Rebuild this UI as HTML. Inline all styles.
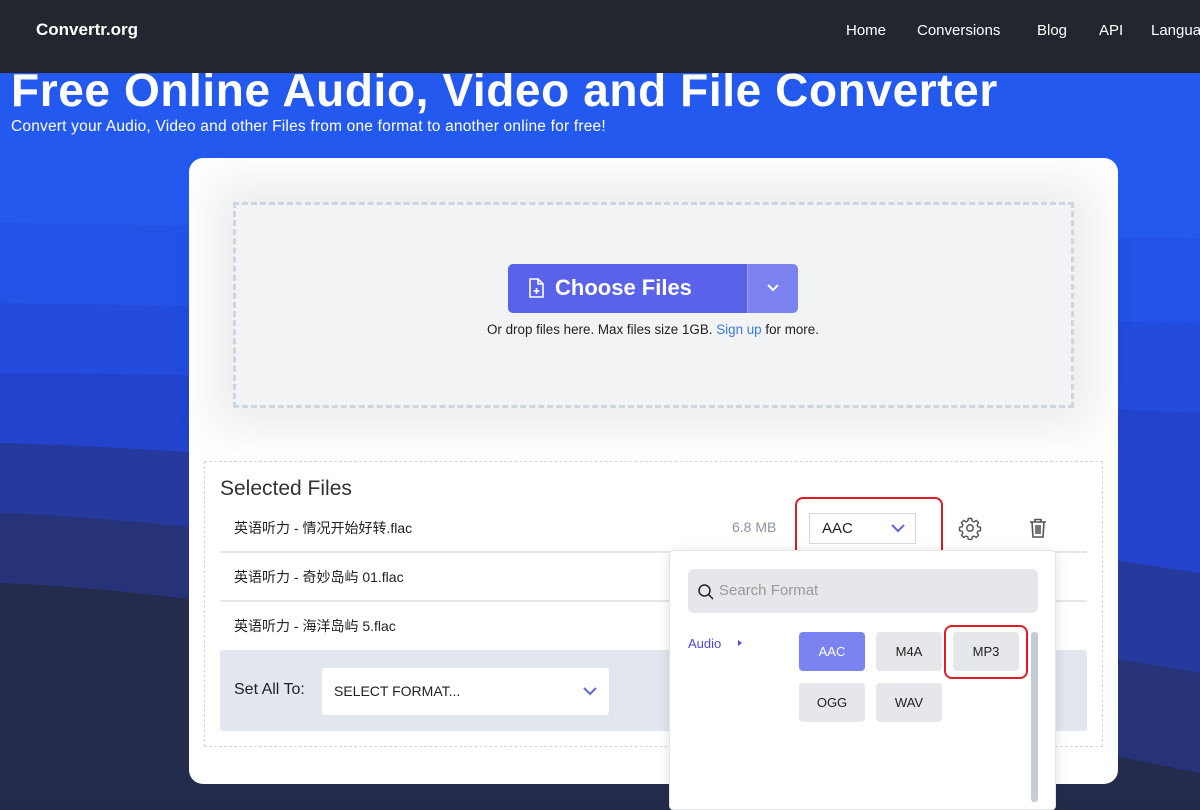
<!DOCTYPE html>
<html><head><meta charset="utf-8"><style>
*{box-sizing:border-box;margin:0;padding:0}
body{width:1200px;height:800px;overflow:hidden;font-family:"Liberation Sans","Noto Sans CJK SC",sans-serif;position:relative;background:#232b4a}
.abs{position:absolute}
nav{position:absolute;left:0;top:0;width:1200px;height:73px;background:#22262f;color:#fff;z-index:2}
nav .logo{position:absolute;left:36px;top:20px;font-size:17px;font-weight:bold}
nav a{position:absolute;top:22px;font-size:15px;color:#fff;text-decoration:none}
h1{position:absolute;left:11px;top:63px;font-size:46px;color:#fff;font-weight:bold;letter-spacing:0.6px;white-space:nowrap}
.sub{position:absolute;left:11px;top:118px;font-size:15.5px;color:#fff;letter-spacing:0.2px}
.card{position:absolute;left:189px;top:158px;width:929px;height:626px;background:#fff;border-radius:14px}
.drop{position:absolute;left:233px;top:202px;width:841px;height:206px;background:#f2f3f5;border:3px dashed #cfd5de;box-shadow:0 0 45px 20px rgba(0,0,0,0.08)}
.btn{position:absolute;left:508px;top:264px;width:239px;height:49px;background:#5a62ea;border-radius:5px 0 0 5px;color:#fff;font-weight:bold;font-size:22px}
.btn2{position:absolute;left:747px;top:264px;width:51px;height:49px;background:#7b82f0;border-radius:0 5px 5px 0;border-left:1px solid #9aa0f5}
.sel{position:absolute;left:204px;top:461px;width:899px;height:286px;border:1px dashed #d4d8de}
.row{position:absolute;left:234px;font-size:14px;color:#222}
.hr{position:absolute;left:220px;width:867px;height:2px;background:#e4e7ec}
.fb{position:absolute;width:66px;height:39px;background:#e5e7eb;border-radius:4px;font-size:13px;color:#222;text-align:center;line-height:39px}
.red{position:absolute;border:2px solid #e01b24;border-radius:8px}
</style></head><body>
<svg class="abs" style="left:0;top:73px" width="1200" height="727" viewBox="0 0 1200 727">
<rect width="1200" height="727" fill="#2459ef"/>
<path d="M0 150 L1200 165 L1200 727 L0 727Z" fill="#2352e6"/>
<path d="M0 230 L1200 250 L1200 727 L0 727Z" fill="#234bdc"/>
<path d="M0 300 Q300 300 1200 340 L1200 727 L0 727Z" fill="#2343cc"/>
<path d="M0 370 Q400 380 1200 500 L1200 727 L0 727Z" fill="#253a9c"/>
<path d="M0 440 Q300 450 1200 600 L1200 727 L0 727Z" fill="#273378"/>
<path d="M0 510 Q300 520 1200 700 L1200 727 L0 727Z" fill="#242c4e"/>
</svg>
<nav><div class="logo">Convertr.org</div>
<a style="left:846px">Home</a><a style="left:917px">Conversions</a><a style="left:1037px">Blog</a><a style="left:1099px">API</a><a style="left:1151px">Language</a></nav>
<h1>Free Online Audio, Video and File Converter</h1>
<div class="sub">Convert your Audio, Video and other Files from one format to another online for free!</div>
<div class="card"></div>
<div class="drop"></div>
<div class="btn"><svg class="abs" style="left:20px;top:14px" width="16" height="21" viewBox="0 0 16 21"><path d="M2 1h8l5 5v13H2z M10 1v5h5" fill="none" stroke="#fff" stroke-width="1.6" stroke-linejoin="round"/><path d="M8.5 10v6M5.5 13h6" stroke="#fff" stroke-width="1.6"/></svg><span class="abs" style="left:47px;top:11px">Choose Files</span></div>
<div class="btn2"><svg class="abs" style="left:18px;top:19px" width="14" height="10"><path d="M2 2l5 5 5-5" fill="none" stroke="#fff" stroke-width="2"/></svg></div>
<div class="abs" style="left:487px;top:322px;font-size:13.4px;color:#222">Or drop files here. Max files size 1GB. <span style="color:#3b7be0">Sign up</span> for more.</div>
<div class="sel"></div>
<div class="abs" style="left:220px;top:477px;font-size:21px;color:#333">Selected Files</div>
<div class="row" style="top:518px">英语听力 - 情况开始好转.flac</div>
<div class="hr" style="top:551px"></div>
<div class="row" style="top:567px">英语听力 - 奇妙岛屿 01.flac</div>
<div class="hr" style="top:600px"></div>
<div class="row" style="top:616px">英语听力 - 海洋岛屿 5.flac</div>
<div class="abs" style="left:220px;top:650px;width:867px;height:81px;background:#e2e7ef;border-radius:3px"></div>
<div class="abs" style="left:234px;top:681px;font-size:16px;color:#222">Set All To:</div>
<div class="abs" style="left:322px;top:668px;width:287px;height:47px;background:#fff;border-radius:3px"><span class="abs" style="left:12px;top:15px;font-size:14px;color:#222">SELECT FORMAT...</span><svg class="abs" style="left:260px;top:18px" width="16" height="12"><path d="M2 2l6 6 6-6" fill="none" stroke="#6366d8" stroke-width="2"/></svg></div>
<div class="abs" style="left:732px;top:519px;font-size:14px;color:#8a94a6">6.8 MB</div>
<div class="abs" style="left:809px;top:513px;width:107px;height:31px;border:1px solid #d5d9df;background:#fff"><span class="abs" style="left:12px;top:6px;font-size:15px;color:#222">AAC</span><svg class="abs" style="left:80px;top:9px" width="16" height="12"><path d="M2 2l6 6 6-6" fill="none" stroke="#6366d8" stroke-width="2"/></svg></div>
<div class="red" style="left:795px;top:497px;width:148px;height:63px"></div>
<svg class="abs" style="left:958px;top:516px" width="24" height="24" viewBox="0 0 24 24"><circle cx="12" cy="12" r="3.2" fill="none" stroke="#555" stroke-width="1.5"/><path d="M10.3 2.5h3.4l.5 2.6 1.8.8 2.2-1.5 2.4 2.4-1.5 2.2.8 1.8 2.6.5v3.4l-2.6.5-.8 1.8 1.5 2.2-2.4 2.4-2.2-1.5-1.8.8-.5 2.6h-3.4l-.5-2.6-1.8-.8-2.2 1.5-2.4-2.4 1.5-2.2-.8-1.8-2.6-.5v-3.4l2.6-.5.8-1.8-1.5-2.2 2.4-2.4 2.2 1.5 1.8-.8z" fill="none" stroke="#555" stroke-width="1.4" stroke-linejoin="round"/></svg>
<svg class="abs" style="left:1029px;top:518px" width="18" height="20" viewBox="0 0 18 20"><path d="M1 4h16M6 4V1.5h6V4M3 4l1 15h10l1-15M7 7v9M9 7v9M11 7v9" fill="none" stroke="#555" stroke-width="1.6"/></svg>
<div class="abs" style="left:669px;top:550px;width:387px;height:260px;background:#fff;border:1px solid #e3e6ea;border-radius:4px;box-shadow:0 2px 12px rgba(0,0,0,0.12)"></div>
<div class="abs" style="left:688px;top:569px;width:350px;height:44px;background:#e5e7eb;border-radius:6px"><svg class="abs" style="left:9px;top:14px" width="18" height="18"><circle cx="7.5" cy="7.5" r="5.5" fill="none" stroke="#222" stroke-width="1.5"/><path d="M11.5 11.5l4.5 4.5" stroke="#222" stroke-width="1.5"/></svg><span class="abs" style="left:31px;top:13px;font-size:15px;color:#999">Search Format</span></div>
<div class="abs" style="left:688px;top:636px;font-size:13px;color:#5046e5">Audio</div>
<div class="abs" style="left:738px;top:640px;width:0;height:0;border-left:4px solid #5046e5;border-top:3.5px solid transparent;border-bottom:3.5px solid transparent"></div>
<div class="fb" style="left:799px;top:632px;background:#7b83f0;color:#fff">AAC</div>
<div class="fb" style="left:876px;top:632px">M4A</div>
<div class="fb" style="left:953px;top:632px">MP3</div>
<div class="fb" style="left:799px;top:683px">OGG</div>
<div class="fb" style="left:876px;top:683px">WAV</div>
<div class="red" style="left:944px;top:625px;width:84px;height:54px"></div>
<div class="abs" style="left:1031px;top:632px;width:7px;height:170px;background:#c6ccd6;border-radius:3px"></div>
</body></html>
